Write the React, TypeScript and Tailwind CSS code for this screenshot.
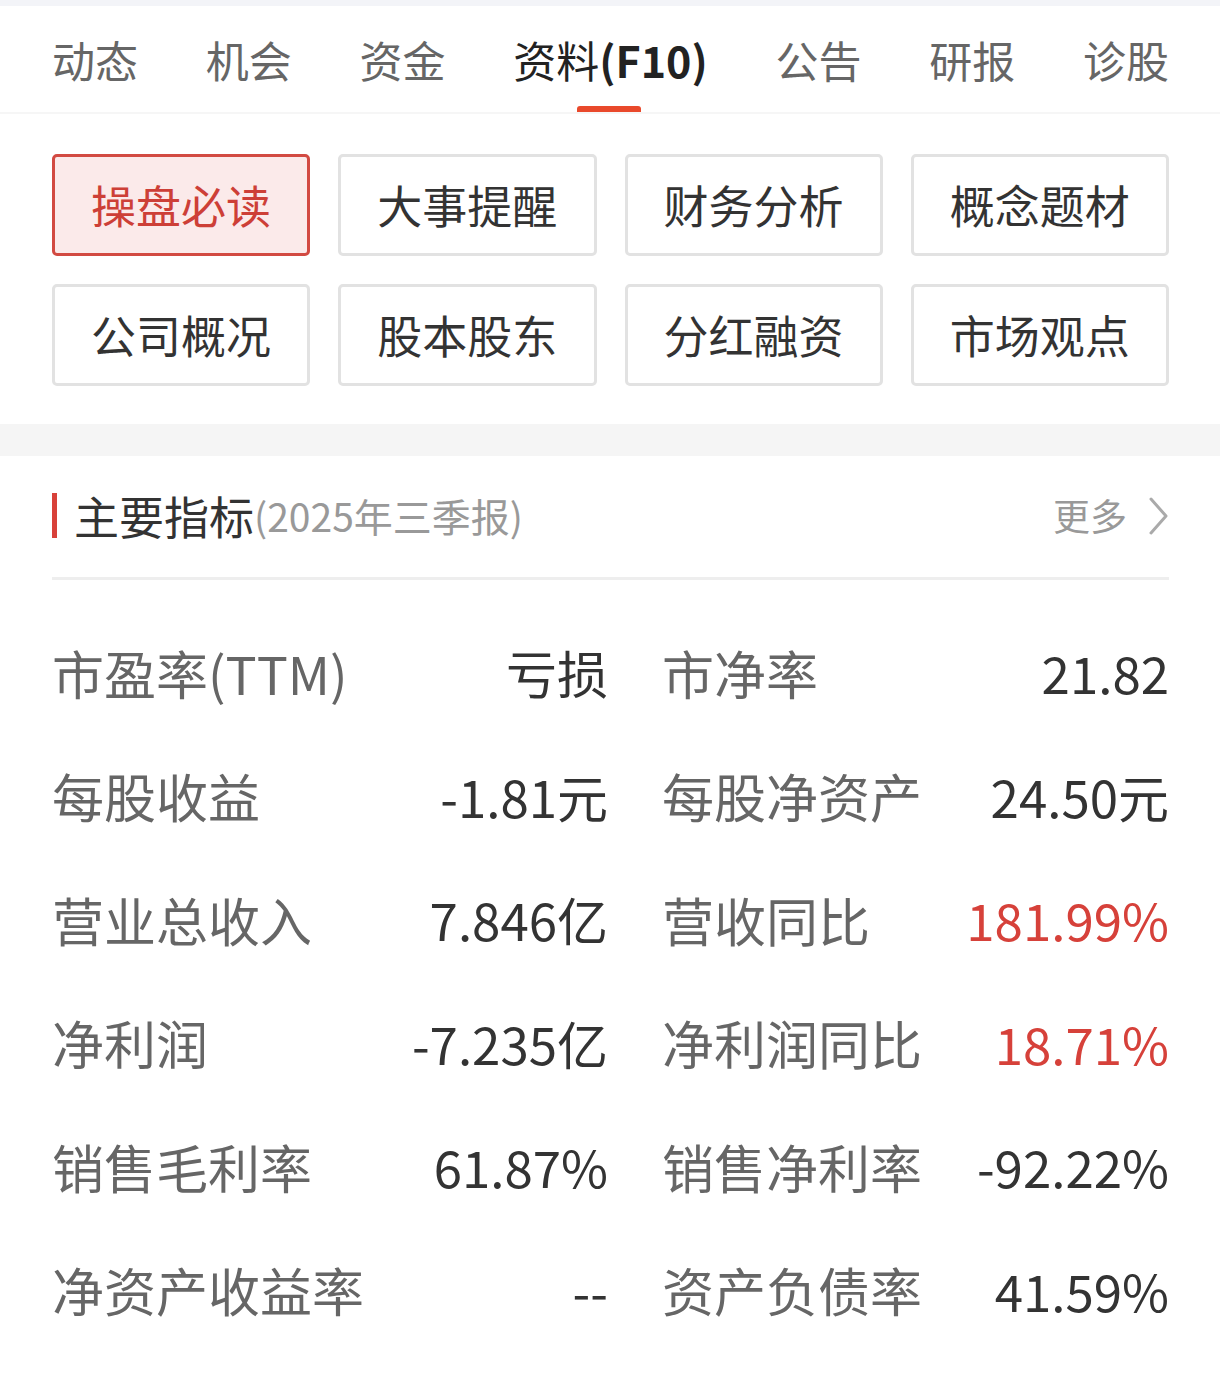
const tabs = ['动态', '机会', '资金', '资料(F10)', '公告', '研报', '诊股'];

const buttons = [
  '操盘必读', '大事提醒', '财务分析', '概念题材',
  '公司概况', '股本股东', '分红融资', '市场观点',
];

type Cell = { label: string; value: string; red?: boolean };

const rows: [Cell, Cell][] = [
  [{ label: '市盈率(TTM)', value: '亏损' }, { label: '市净率', value: '21.82' }],
  [{ label: '每股收益', value: '-1.81元' }, { label: '每股净资产', value: '24.50元' }],
  [{ label: '营业总收入', value: '7.846亿' }, { label: '营收同比', value: '181.99%', red: true }],
  [{ label: '净利润', value: '-7.235亿' }, { label: '净利润同比', value: '18.71%', red: true }],
  [{ label: '销售毛利率', value: '61.87%' }, { label: '销售净利率', value: '-92.22%' }],
  [{ label: '净资产收益率', value: '--' }, { label: '资产负债率', value: '41.59%' }],
];

function Metric({ cell }: { cell: Cell }) {
  return (
    <div className="flex items-center justify-between">
      <span className="text-[52px] text-[#666666]">{cell.label}</span>
      <span className={cell.red ? 'text-[51px] text-[#d6413a]' : 'text-[51px] text-[#333333]'}>{cell.value}</span>
    </div>
  );
}

export default function App() {
  return (
    <div className="w-[1220px] min-h-[1375px] bg-white font-['Noto_Sans_CJK_SC','Noto_Sans',sans-serif]">
      <div className="h-[6px] bg-[#f3f4f8]" />

      {/* tab bar */}
      <div className="flex h-[108px] items-stretch justify-between border-b-2 border-[#f6f6f6] pl-[52px] pr-[51px]">
        {tabs.map((t, i) => (
          <div key={t} className="relative flex items-center">
            <span
              className={
                i === 3
                  ? 'text-[43px] leading-none text-[#222222]'
                  : 'text-[43px] leading-none text-[#666666]'
              }
            >
              {i === 3 ? (
                <>
                  资料<span className="font-bold">(F10)</span>
                </>
              ) : (
                t
              )}
            </span>
            {i === 3 && (
              <div className="absolute bottom-0 left-[64px] h-[6px] w-[64px] rounded-t-[3px] bg-[#e9492b]" />
            )}
          </div>
        ))}
      </div>

      {/* quick buttons */}
      <div className="grid grid-cols-4 gap-x-[28px] gap-y-[28px] pl-[52px] pr-[51px] pt-[40px] pb-[38px]">
        {buttons.map((b, i) => (
          <div
            key={b}
            className={
              i === 0
                ? 'flex h-[102px] items-center justify-center rounded-[5px] border-[3px] border-[#d24a42] bg-[#fbeaea] text-[45px] text-[#cd3f37]'
                : 'flex h-[102px] items-center justify-center rounded-[5px] border-[3px] border-[#e2e2e2] bg-white text-[45px] text-[#333333]'
            }
          >
            {b}
          </div>
        ))}
      </div>

      <div className="h-[32px] bg-[#f5f5f5]" />

      {/* key indicators */}
      <div className="pl-[52px] pr-[51px]">
        <div className="flex h-[124px] items-center justify-between border-b-[3px] border-[#eeeeee] pb-[2px]">
          <div className="flex items-center">
            <div className="h-[45px] w-[5px] bg-[#d8413a]" />
            <span className="ml-[17px] text-[45px] leading-none text-[#333333]">主要指标</span>
            <span className="text-[39px] leading-none text-[#999999]">(2025年三季报)</span>
          </div>
          <div className="flex items-center text-[37px] text-[#999999]">
            <span>更多</span>
            <svg width="20" height="38" viewBox="0 0 20 38" fill="none" className="ml-[22px]">
              <polyline points="2,2 17,19 2,36" stroke="#aaaaaa" strokeWidth="3" strokeLinecap="round" strokeLinejoin="round" />
            </svg>
          </div>
        </div>

        <div className="pt-[31px] leading-none">
          {rows.map(([l, r], i) => (
            <div key={i} className="grid h-[123.5px] grid-cols-[556px_1fr] items-center gap-x-[54px]">
              <Metric cell={l} />
              <Metric cell={r} />
            </div>
          ))}
        </div>
      </div>
    </div>
  );
}
